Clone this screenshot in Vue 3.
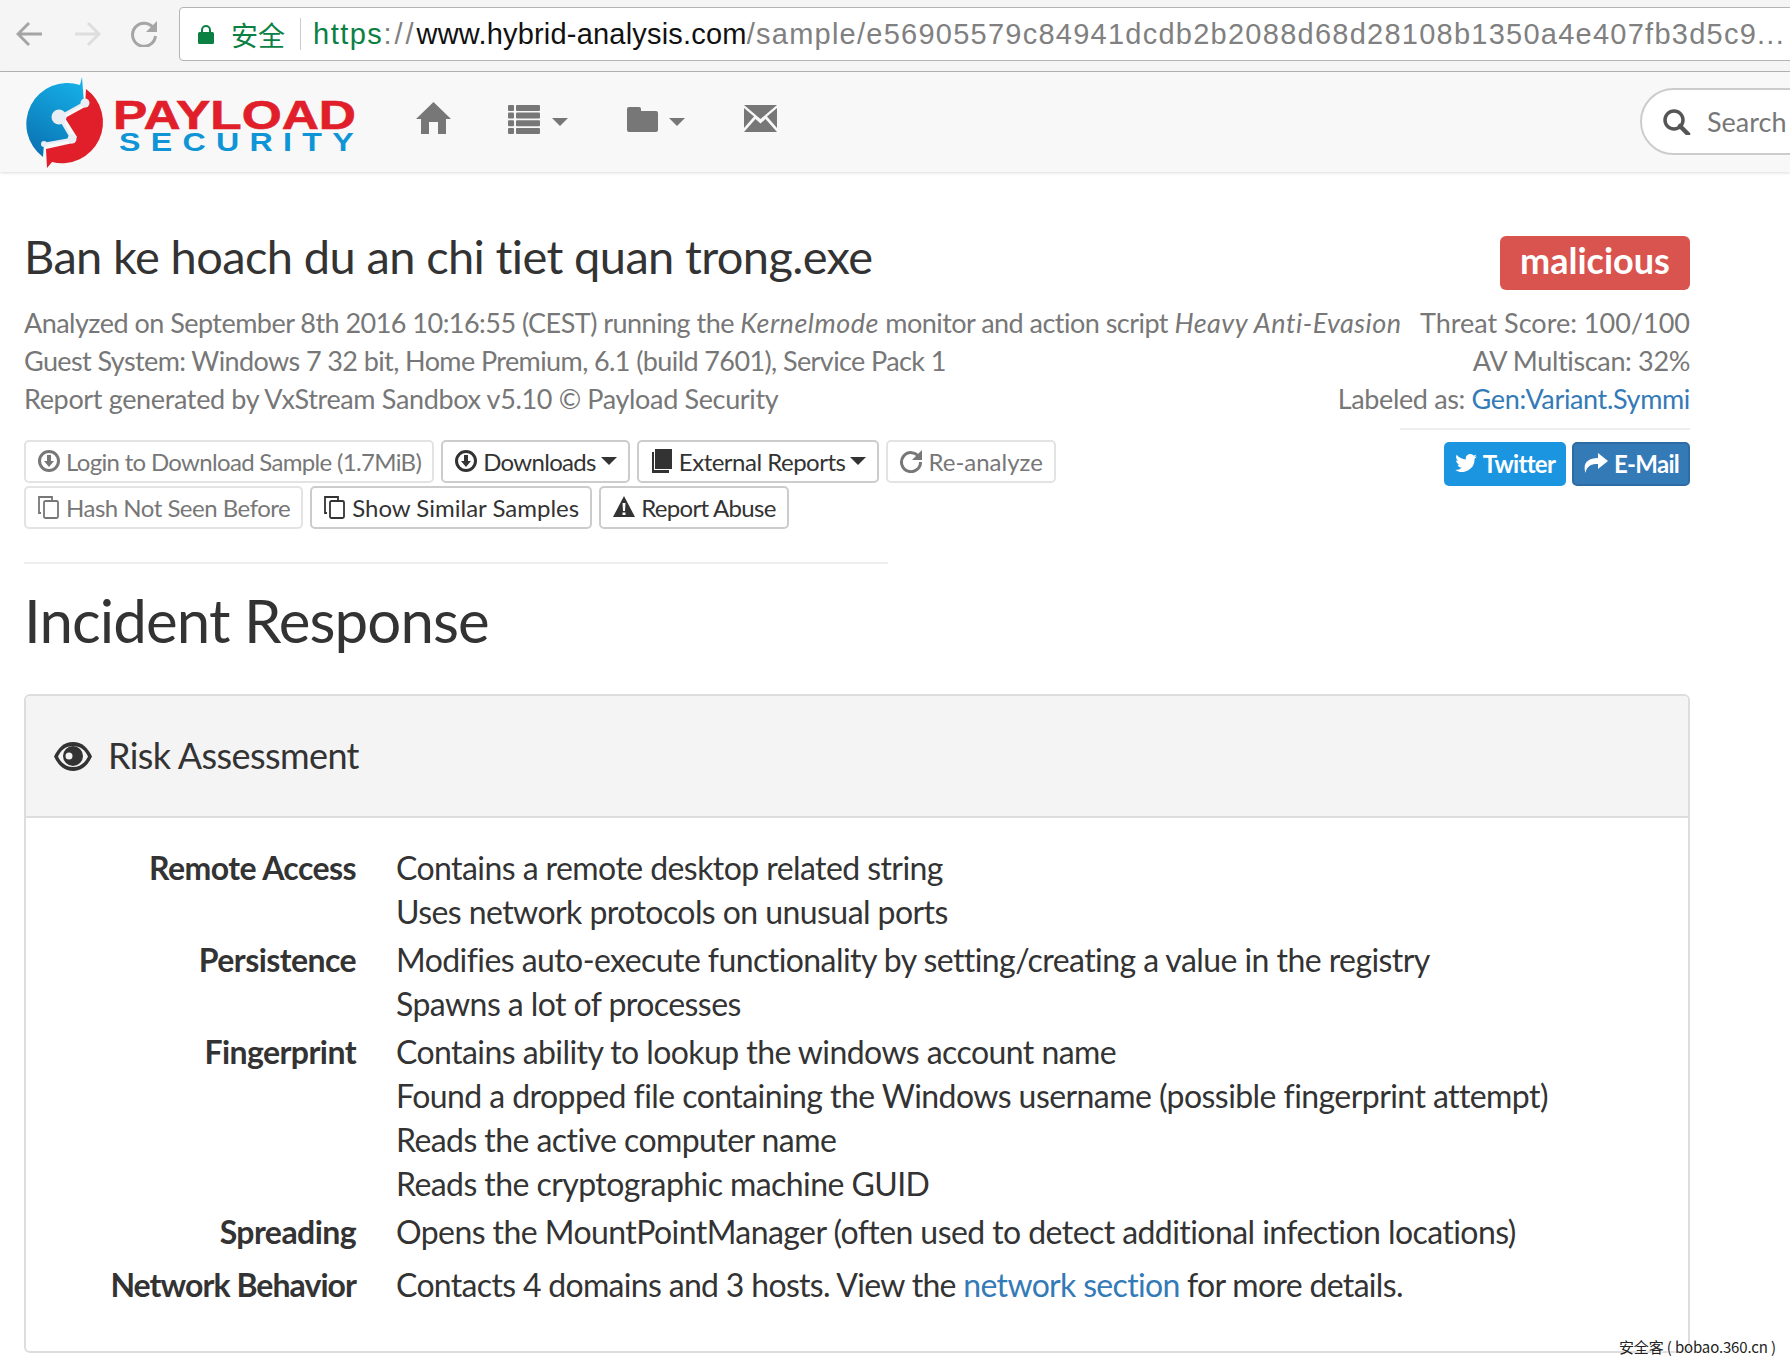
<template>
  <div class="page">
    <!-- browser chrome -->
    <div class="chrome">
      <svg class="chrome-icon" width="28" height="26" viewBox="0 0 28 26"><path d="M26 13H3M13 2L2 13l11 11" fill="none" stroke="#a5a5a5" stroke-width="3"/></svg>
      <svg class="chrome-icon" width="28" height="26" viewBox="0 0 28 26"><path d="M2 13h23M15 2l11 11-11 11" fill="none" stroke="#dedede" stroke-width="3"/></svg>
      <svg class="chrome-icon" width="28" height="26" viewBox="0 0 28 26"><path d="M24 8A11.500 11.500 0 1 0 25.500 15" fill="none" stroke="#a5a5a5" stroke-width="3"/><path d="M27 0v11H16z" fill="#a5a5a5"/></svg>
      <div class="urlbox">
        <svg class="lock" width="16" height="20" viewBox="0 0 16 20"><path d="M4 9V6a4 4 0 0 1 8 0v3" fill="none" stroke="#0b8043" stroke-width="2"/><rect y="8" width="16" height="12" rx="1.500" fill="#0b8043"/></svg>
        <span class="secure">安全</span>
        <span class="url-sep"></span>
        <span class="url"><span class="u-green">https</span><span class="u-scheme">://</span><span class="u-black">www.hybrid-analysis.com</span><span class="u-grey">/sample/e56905579c84941dcdb2b2088d68d28108b1350a4e407fb3d5c9...</span></span>
      </div>
    </div>

    <!-- navbar -->
    <nav class="navbar">
      <svg class="logo" width="340" height="96" viewBox="0 0 340 96">
        <defs>
          <linearGradient id="logoBlue" x1="0.700" y1="0" x2="0.300" y2="1">
            <stop offset="0" stop-color="#16aee6"/>
            <stop offset="1" stop-color="#0a74b4"/>
          </linearGradient>
        </defs>
        <path d="M59 0L61 26 36 40 49 62 21 67 20 80A41 41 0 0 1 57 8z" fill="url(#logoBlue)"/>
        <path d="M63 12A41 41 0 0 1 29 85L24 91 23 72 50 66 54 60 42 41 62 30z" fill="#e01f2a"/>
        <path d="M61 26L36 40 49 62 21 67" fill="none" stroke="#e8eef3" stroke-width="2.500"/>
        <circle cx="36" cy="40" r="7.500" fill="#e8eef3"/>
        <circle cx="62" cy="26" r="4.500" fill="#e8eef3"/>
        <circle cx="49" cy="62" r="4.500" fill="#e8eef3"/>
        <circle cx="21" cy="67" r="3" fill="#e8eef3"/>
        <text x="90" y="51.500" class="logo-a" textLength="243" lengthAdjust="spacingAndGlyphs">PAYLOAD</text>
        <text x="96" y="74" class="logo-b" textLength="245" lengthAdjust="spacingAndGlyphs">SECURITY</text>
      </svg>

      <svg class="nav-home" width="35" height="32" viewBox="0 0 35 32"><path d="M17.500 0L35 17h-5v15h-8V20h-9v12H5V17H0z" fill="#777"/></svg>
      <div class="nav-item nav-list">
        <svg width="32" height="29" viewBox="0 0 32 29" fill="#777"><rect width="6" height="6" rx="1"/><rect x="8" width="24" height="6" rx="1"/><rect y="7.600" width="6" height="6" rx="1"/><rect x="8" y="7.600" width="24" height="6" rx="1"/><rect y="15.200" width="6" height="6" rx="1"/><rect x="8" y="15.200" width="24" height="6" rx="1"/><rect y="23" width="6" height="6" rx="1"/><rect x="8" y="23" width="24" height="6" rx="1"/></svg>
        <span class="nav-caret"></span>
      </div>
      <div class="nav-item nav-folder">
        <svg width="31" height="25" viewBox="0 0 31 25" fill="#777"><path d="M2 0h10a2 2 0 0 1 2 2v2h15a2 2 0 0 1 2 2v17a2 2 0 0 1-2 2H2a2 2 0 0 1-2-2V2a2 2 0 0 1 2-2z"/></svg>
        <span class="nav-caret"></span>
      </div>
      <svg class="nav-mail" width="33" height="27" viewBox="0 0 33 27" fill="#777"><path d="M0 0h33L16.500 14z"/><path d="M0 3v20l10-11.500zM33 3v20L23 11.500z"/><path d="M0 27l11.500-13 5 4.500 5-4.500L33 27z"/></svg>

      <div class="search">
        <svg width="28" height="26" viewBox="0 0 28 26"><circle cx="11" cy="11" r="9" fill="none" stroke="#555" stroke-width="3.500"/><path d="M17 17l8 8" stroke="#555" stroke-width="4.500" stroke-linecap="round"/></svg>
        <span>Search</span>
      </div>
    </nav>

    <main class="content">
      <div class="title-row">
        <h2 class="sample-title">Ban ke hoach du an chi tiet quan trong.exe</h2>
        <span class="verdict">malicious</span>
      </div>

      <div class="info">
        <div class="info-row l1">
          <div>Analyzed on September 8th 2016 10:16:55 (CEST) running the <em>Kernelmode</em> monitor and action script <em>Heavy Anti-Evasion</em></div>
          <div class="info-score">Threat Score: 100/100</div>
        </div>
        <div class="info-row l2">
          <div>Guest System: Windows 7 32 bit, Home Premium, 6.1 (build 7601), Service Pack 1</div>
          <div class="l3">AV Multiscan: 32%</div>
        </div>
        <div class="info-row l3">
          <div>Report generated by VxStream Sandbox v5.10 © Payload Security</div>
          <div>Labeled as: <a>Gen:Variant.Symmi</a></div>
        </div>
      </div>

      <div class="actions-row">
        <div class="actions">
          <div class="btn-line">
            <span class="btn off">
              <svg class="ic" viewBox="0 0 24 24"><circle cx="12" cy="12" r="9.500" fill="none" stroke="currentColor" stroke-width="3"/><path d="M10 6h4v6h3l-5 6-5-6h3z" fill="currentColor"/></svg>
              Login to Download Sample (1.7MiB)
            </span>
            <span class="btn">
              <svg class="ic" viewBox="0 0 24 24"><circle cx="12" cy="12" r="9.500" fill="none" stroke="currentColor" stroke-width="3"/><path d="M10 6h4v6h3l-5 6-5-6h3z" fill="currentColor"/></svg>
              Downloads <i class="caret"></i>
            </span>
            <span class="btn mid">
              <svg class="ic" viewBox="0 0 24 24" fill="currentColor"><path d="M5 0h17v20H5z"/><path d="M2 3h2v18h15v3H2z"/></svg>
              External Reports <i class="caret"></i>
            </span>
            <span class="btn off wide">
              <svg class="ic" viewBox="0 0 24 24"><path d="M20 8A9.500 9.500 0 1 0 21.500 13" fill="none" stroke="currentColor" stroke-width="3"/><path d="M23 1v10H13z" fill="currentColor"/></svg>
              Re-analyze
            </span>
          </div>
          <div class="btn-line">
            <span class="btn off mid">
              <svg class="ic" viewBox="0 0 24 24" fill="none" stroke="currentColor" stroke-width="1.800"><path d="M4 18H2V2h13v3"/><rect x="7" y="6" width="14" height="17" rx="1.500"/></svg>
              Hash Not Seen Before
            </span>
            <span class="btn wide">
              <svg class="ic" viewBox="0 0 24 24" fill="none" stroke="currentColor" stroke-width="1.800"><path d="M4 18H2V2h13v3"/><rect x="7" y="6" width="14" height="17" rx="1.500"/></svg>
              Show Similar Samples
            </span>
            <span class="btn">
              <svg class="ic" viewBox="0 0 24 24"><path d="M12 1l11 21H1z" fill="currentColor"/><path d="M10.500 8h3l-.5 8h-2zM10.500 17.500h3v2.500h-3z" fill="#fff"/></svg>
              Report Abuse
            </span>
          </div>
        </div>
        <div class="share">
          <div class="share-rule"></div>
          <div class="share-btns">
            <span class="sbtn twitter">
              <svg width="22" height="18" viewBox="0 0 24 20"><path d="M24 2.400c-.9.400-1.800.7-2.800.8 1-.6 1.800-1.600 2.200-2.700-1 .6-2 1-3.100 1.200A4.900 4.900 0 0 0 11.900 6.200C7.800 6 4.200 4 1.700.9.400 3.200 1 6 3.200 7.500c-.8 0-1.600-.2-2.200-.6 0 2.400 1.700 4.400 3.900 4.900-.7.200-1.500.2-2.200.1.600 2 2.400 3.400 4.600 3.400A9.900 9.900 0 0 1 0 17.800 14 14 0 0 0 21.500 5.400c1-.7 1.900-1.700 2.500-3z" fill="#fff"/></svg>
              Twitter
            </span>
            <span class="sbtn email">
              <svg width="25" height="20" viewBox="0 0 25 20"><path d="M15 0l10 8-10 8v-5C9 11 4 12 2.500 20-.5 11 4 5 15 5z" fill="#fff"/></svg>
              E-Mail
            </span>
          </div>
        </div>
      </div>

      <div class="section-rule"></div>
      <h1 class="section-title">Incident Response</h1>

      <section class="panel">
        <header class="panel-head">
          <svg width="38" height="29" viewBox="0 0 38 29"><path d="M19 0c9 0 15 6 19 14.500C34 23 28 29 19 29S4 23 0 14.500C4 6 10 0 19 0z" fill="#333"/><path d="M19 4C12 4 7 8 4 14.500 7 21 12 25 19 25s12-4 15-10.500C31 8 26 4 19 4z" fill="#f4f4f4"/><circle cx="19" cy="14" r="10" fill="#333"/><circle cx="15" cy="14" r="3.500" fill="#f4f4f4"/></svg>
          <span class="panel-title">Risk Assessment</span>
        </header>
        <dl class="risk">
          <template v-for="group in risks" :key="group.label">
            <dt>{{ group.label }}</dt>
            <dd>
              <div v-for="line in group.lines" :key="line">{{ line }}</div>
            </dd>
          </template>
          <dt class="last">Network Behavior</dt>
          <dd class="last">Contacts 4 domains and 3 hosts. View the <a>network section</a> for more details.</dd>
        </dl>
      </section>
    </main>

    <div class="watermark">安全客 ( bobao.360.cn )</div>
  </div>
</template>

<script setup>
// risk assessment rows
const risks = [
  {
    label: 'Remote Access',
    lines: ['Contains a remote desktop related string', 'Uses network protocols on unusual ports'],
  },
  {
    label: 'Persistence',
    lines: ['Modifies auto-execute functionality by setting/creating a value in the registry', 'Spawns a lot of processes'],
  },
  {
    label: 'Fingerprint',
    lines: [
      'Contains ability to lookup the windows account name',
      'Found a dropped file containing the Windows username (possible fingerprint attempt)',
      'Reads the active computer name',
      'Reads the cryptographic machine GUID',
    ],
  },
  {
    label: 'Spreading',
    lines: ['Opens the MountPointManager (often used to detect additional infection locations)'],
  },
];
</script>

<style>
html, body {
  background: #fff;
  overflow: hidden;
}
</style>

<style scoped>
.page {
  position: relative;
  width: 1790px;
  height: 1366px;
  overflow: hidden;
  background: #fff;
  color: #333;
  font-family: Lato, "Noto Sans", sans-serif;
}

.chrome {
  height: 71px;
  border-bottom: 1px solid #b4b4b4;
  background: #f5f5f5;
  display: flex;
  align-items: flex-start;
}
.chrome-icon {
  margin: 21px 0 0 16px;
  flex: none;
}
.chrome-icon + .chrome-icon {
  margin-left: 29px;
}
.urlbox {
  margin: 7px -10px 0 21px;
  height: 52px;
  flex: 1;
  border: 1px solid #b4b4b4;
  border-radius: 4px;
  background: #fff;
  display: flex;
  align-items: center;
  white-space: nowrap;
  overflow: hidden;
}
.lock {
  margin-left: 18px;
  flex: none;
}
.secure {
  margin-left: 17px;
  font: 27px "Noto Sans CJK SC", sans-serif;
  color: #0b8043;
}
.url-sep {
  width: 1px;
  height: 32px;
  margin: 0 12px 0 15px;
  background: #ccc;
}
.url {
  font: 29px "Liberation Sans", Arial, sans-serif;
}
.u-green {
  color: #0b8043;
  letter-spacing: 1.500px;
}
.u-scheme {
  color: #808080;
  letter-spacing: 3px;
}
.u-grey {
  color: #808080;
  letter-spacing: 1.250px;
}
.u-black {
  color: #111;
  letter-spacing: 0.200px;
}

.navbar {
  height: 100px;
  background: #f8f8f8;
  box-shadow: 0 1px 3px rgba(0, 0, 0, 0.14);
  display: flex;
  align-items: flex-start;
  position: relative;
}
.logo {
  flex: none;
  margin: 5px 0 0 23px;
}
.logo-a {
  font: bold 40px "Liberation Sans", Arial, sans-serif;
  fill: #e01f2a;
  stroke: #e01f2a;
  stroke-width: 0.600;
}
.logo-b {
  font: bold 25px "Liberation Sans", Arial, sans-serif;
  letter-spacing: 8px;
  fill: #0f95d6;
}
.nav-home {
  flex: none;
  margin: 30px 0 0 53px;
}
.nav-item {
  display: flex;
  align-items: center;
  flex: none;
}
.nav-list {
  margin: 33px 0 0 57px;
  gap: 12px;
}
.nav-folder {
  margin: 35px 0 0 59px;
  gap: 11px;
}
.nav-caret {
  width: 0;
  height: 0;
  margin-top: 5px;
  border-left: 8px solid transparent;
  border-right: 8px solid transparent;
  border-top: 8px solid #777;
}
.nav-mail {
  flex: none;
  margin: 33px 0 0 59px;
}
.search {
  position: absolute;
  left: 1640px;
  top: 16px;
  width: 200px;
  height: 67px;
  box-sizing: border-box;
  border: 2px solid #ccc;
  border-radius: 34px;
  background: #fff;
  display: flex;
  align-items: center;
  gap: 16px;
  padding-left: 21px;
  font-size: 27px;
  color: #777;
}

.content {
  width: 1666px;
  margin-left: 24px;
}
.title-row {
  display: flex;
  justify-content: space-between;
  align-items: flex-start;
  padding-top: 64px;
}
.sample-title {
  margin: -9px 0 0;
  font-size: 47px;
  font-weight: 400;
  line-height: 58px;
  letter-spacing: -0.630px;
}
.verdict {
  width: 190px;
  height: 54px;
  line-height: 48px;
  text-align: center;
  border-radius: 6px;
  background: #d9534f;
  color: #fff;
  font-size: 36px;
  font-weight: 700;
}
.info {
  margin-top: 14px;
  font-size: 27px;
  line-height: 38px;
  color: #777;
  white-space: nowrap;
}
.info-row {
  display: flex;
  justify-content: space-between;
}
.info-score {
  letter-spacing: 0;
}
.l1 {
  letter-spacing: -0.530px;
}
.l1 em {
  letter-spacing: 0.500px;
}
.l2 {
  letter-spacing: -0.600px;
}
.l3 {
  letter-spacing: -0.350px;
}
.info a {
  color: #337ab7;
}
.actions-row {
  display: flex;
  justify-content: space-between;
  align-items: flex-start;
}
.actions {
  margin-top: 22px;
}
.btn-line {
  display: flex;
  gap: 7px;
  margin-bottom: 3px;
}
.btn {
  height: 43px;
  box-sizing: border-box;
  border: 2px solid #ccc;
  border-radius: 5px;
  padding: 0 11px 1px;
  display: flex;
  align-items: center;
  gap: 5px;
  font-size: 24px;
  letter-spacing: -0.680px;
  color: #333;
  white-space: nowrap;
}
.btn.mid {
  letter-spacing: -0.500px;
}
.btn.wide {
  letter-spacing: 0;
}
.btn.off {
  color: #777;
  border-color: #e3e3e3;
}
.ic {
  width: 24px;
  height: 24px;
  flex: none;
}
.caret {
  width: 0;
  height: 0;
  margin-left: 0;
  border-left: 8px solid transparent;
  border-right: 8px solid transparent;
  border-top: 8px solid currentColor;
}
.share {
  width: 290px;
  margin-top: 10px;
}
.share-rule {
  height: 2px;
  background: #eee;
}
.share-btns {
  display: flex;
  justify-content: flex-end;
  gap: 6px;
  margin-top: 12px;
}
.sbtn {
  height: 44px;
  box-sizing: border-box;
  border-radius: 5px;
  padding-bottom: 2px;
  display: flex;
  align-items: center;
  justify-content: center;
  gap: 6px;
  color: #fff;
  font-size: 24px;
  font-weight: 700;
  letter-spacing: -0.700px;
}
.twitter {
  width: 122px;
  background: #1b95e0;
}
.email {
  width: 118px;
  background: #337ab7;
  border: 2px solid #2e6da4;
}
.section-rule {
  width: 864px;
  height: 2px;
  margin-top: 30px;
  background: #eee;
}
.section-title {
  margin: 18px 0 0;
  font-size: 60px;
  font-weight: 400;
  line-height: 76px;
  letter-spacing: -0.900px;
}
.panel {
  margin-top: 36px;
  height: 659px;
  box-sizing: border-box;
  border: 2px solid #ddd;
  border-radius: 6px;
  overflow: hidden;
}
.panel-head {
  height: 122px;
  box-sizing: border-box;
  background: #f4f4f4;
  border-bottom: 2px solid #ddd;
  display: flex;
  align-items: center;
  gap: 16px;
  padding-left: 28px;
  font-size: 36px;
  letter-spacing: -0.600px;
}
.panel-title {
  margin-top: -3px;
}
.risk {
  margin: 0;
  padding-top: 28px;
  display: grid;
  grid-template-columns: 330px 1fr;
  column-gap: 40px;
  row-gap: 4px;
  font-size: 32px;
  line-height: 44px;
  letter-spacing: -0.570px;
}
.risk dt {
  text-align: right;
  font-weight: 700;
}
.risk dt.last {
  letter-spacing: -0.950px;
}
.risk dd {
  margin: 0;
  white-space: nowrap;
}
.risk .last {
  margin-top: 5px;
}
.risk dd.last {
  letter-spacing: -0.680px;
}
.risk a {
  color: #337ab7;
}

.watermark {
  position: absolute;
  left: 1619px;
  top: 1336px;
  font: 15px "Noto Sans CJK SC", "Liberation Sans", sans-serif;
  letter-spacing: -0.150px;
  color: #222;
  text-shadow: 1px 1px 0 #fff, -1px 0 0 #fff;
  white-space: nowrap;
}
</style>
